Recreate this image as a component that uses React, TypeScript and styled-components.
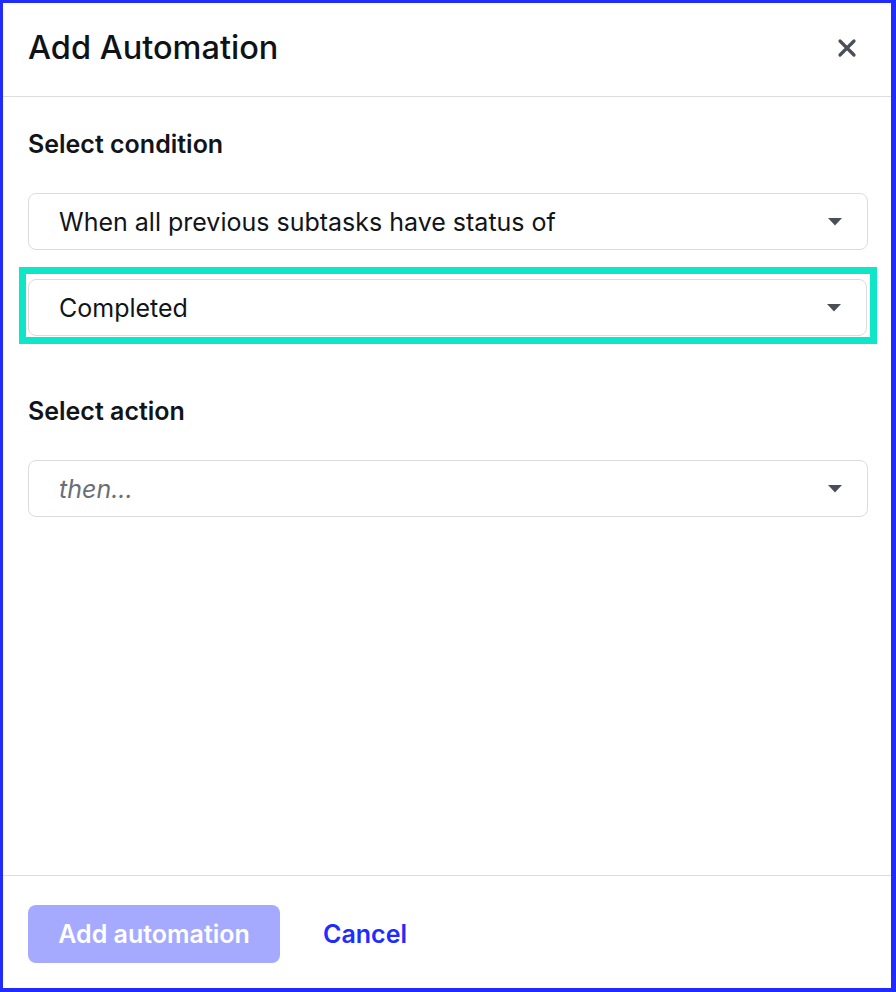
import React from "react";
import styled, { createGlobalStyle } from "styled-components";

const GlobalStyle = createGlobalStyle`
  html, body {
    margin: 0;
    padding: 0;
    background: #ffffff;
  }
  body {
    font-family: Inter, "Noto Sans", sans-serif;
    color: #111418;
  }
  * {
    box-sizing: border-box;
  }
`;

const Frame = styled.div`
  width: 896px;
  height: 992px;
  border-style: solid;
  border-color: #1f2bff;
  border-width: 3px 5px 4px 3px;
  background: #ffffff;
  display: flex;
  flex-direction: column;
`;

const Header = styled.header`
  height: 94px;
  flex-shrink: 0;
  display: flex;
  align-items: center;
  justify-content: space-between;
  padding: 0 30px 4px 25px;
  border-bottom: 1px solid #dedede;
`;

const Title = styled.h1`
  margin: 0;
  font-size: 32.5px;
  font-weight: 500;
  color: #0f1318;
`;

const CloseButton = styled.button`
  border: none;
  background: none;
  padding: 0;
  width: 28px;
  height: 28px;
  display: flex;
  align-items: center;
  justify-content: center;
  cursor: pointer;
`;

const Body = styled.main`
  flex: 1;
  display: flex;
  flex-direction: column;
  padding: 32px 23px 0 25px;
`;

const SectionLabel = styled.h2<{ $top?: number }>`
  margin: ${(p) => p.$top ?? 0}px 0 0;
  font-size: 25px;
  font-weight: 600;
  line-height: 30px;
  color: #111418;
`;

const Highlight = styled.div`
  margin: 17px -9px 0 -9px;
  border: 7px solid #0fe6c8;
  padding: 5px 3px 1px 2px;
`;

const Select = styled.div<{ $top?: number }>`
  margin-top: ${(p) => p.$top ?? 0}px;
  height: 57px;
  border: 1px solid #dcdcdc;
  border-radius: 8px;
  display: flex;
  align-items: center;
  justify-content: space-between;
  padding: 0 25px 0 30px;
  background: #ffffff;
`;

const SelectText = styled.span<{ $placeholder?: boolean }>`
  font-size: 25px;
  font-weight: 400;
  color: ${(p) => (p.$placeholder ? "#6b6f75" : "#111418")};
  font-style: ${(p) => (p.$placeholder ? "italic" : "normal")};
`;

const Footer = styled.footer`
  height: 113px;
  flex-shrink: 0;
  border-top: 1px solid #dedede;
  display: flex;
  align-items: center;
  gap: 43px;
  padding: 4px 25px 0;
`;

const PrimaryButton = styled.button`
  height: 58px;
  width: 252px;
  border: none;
  border-radius: 8px;
  background: #a5aaff;
  color: #ffffff;
  font-family: Inter, "Noto Sans", sans-serif;
  font-size: 25px;
  font-weight: 600;
  cursor: not-allowed;
`;

const LinkButton = styled.button`
  border: none;
  background: none;
  padding: 0;
  color: #1f2bff;
  font-family: Inter, "Noto Sans", sans-serif;
  font-size: 25px;
  font-weight: 600;
  cursor: pointer;
`;

const Caret = () => (
  <svg width="14" height="8" viewBox="0 0 14 8">
    <path d="M0 0 L14 0 L7 7.5 Z" fill="#4a4f57" />
  </svg>
);

const CloseIcon = () => (
  <svg width="20" height="20" viewBox="0 0 20 20">
    <path
      d="M3 3 L17 17 M17 3 L3 17"
      stroke="#4a4f57"
      strokeWidth="3.2"
      strokeLinecap="round"
    />
  </svg>
);

type DropdownProps = {
  value: string;
  placeholder?: boolean;
  top?: number;
};

const Dropdown = ({ value, placeholder, top }: DropdownProps) => (
  <Select $top={top}>
    <SelectText $placeholder={placeholder}>{value}</SelectText>
    <Caret />
  </Select>
);

export default function App() {
  return (
    <>
      <GlobalStyle />
      <Frame>
        <Header>
          <Title>Add Automation</Title>
          <CloseButton aria-label="Close">
            <CloseIcon />
          </CloseButton>
        </Header>
        <Body>
          <SectionLabel>Select condition</SectionLabel>
          <Dropdown value="When all previous subtasks have status of" top={34} />
          <Highlight>
            <Dropdown value="Completed" />
          </Highlight>
          <SectionLabel $top={52}>Select action</SectionLabel>
          <Dropdown value="then..." placeholder top={34} />
        </Body>
        <Footer>
          <PrimaryButton disabled>Add automation</PrimaryButton>
          <LinkButton>Cancel</LinkButton>
        </Footer>
      </Frame>
    </>
  );
}
